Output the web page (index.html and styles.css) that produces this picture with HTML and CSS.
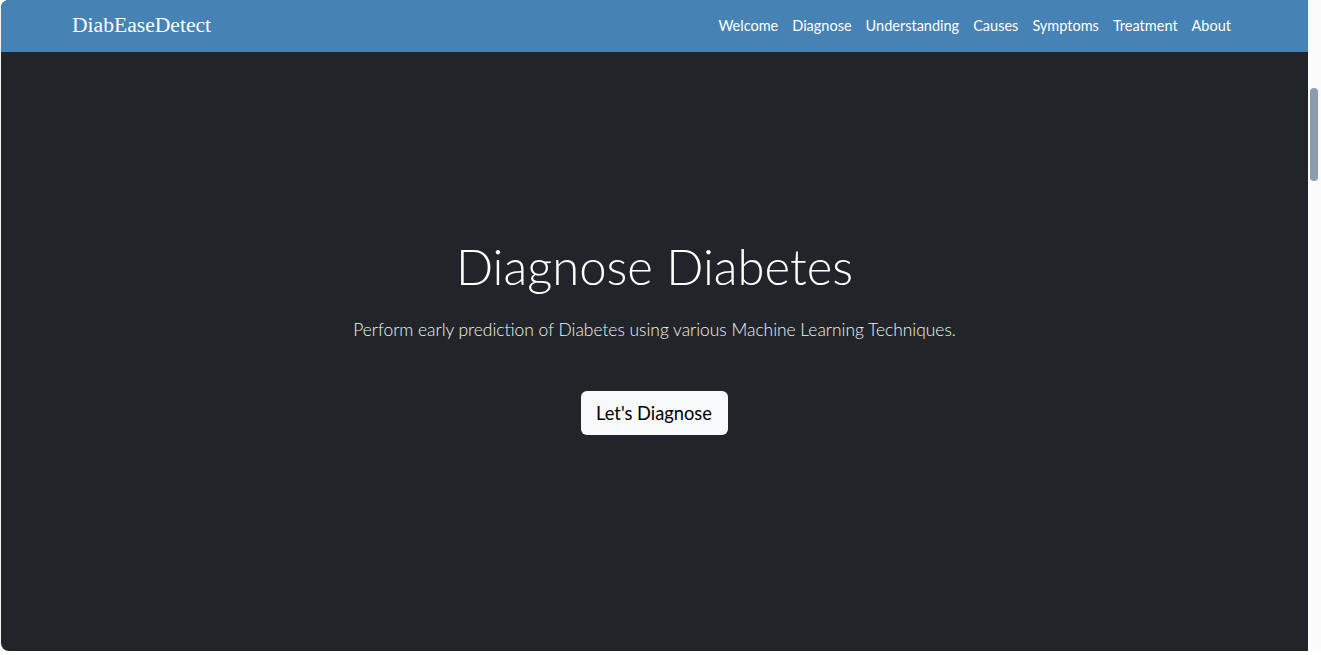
FILE: index.html
```html
<!DOCTYPE html>
<html lang="en">
<head>
<meta charset="utf-8">
<title>DiabEaseDetect</title>
<link rel="stylesheet" href="styles.css">
</head>
<body>
<div class="window">
  <div class="page">
    <nav class="navbar">
      <a class="brand" href="#">DiabEaseDetect</a>
      <ul class="nav-links">
        <li><a href="#">Welcome</a></li>
        <li><a href="#">Diagnose</a></li>
        <li><a href="#">Understanding</a></li>
        <li><a href="#">Causes</a></li>
        <li><a href="#">Symptoms</a></li>
        <li><a href="#">Treatment</a></li>
        <li><a href="#">About</a></li>
      </ul>
    </nav>
    <section class="hero">
      <h1 class="hero-title">Diagnose Diabetes</h1>
      <p class="hero-lead">Perform early prediction of Diabetes using various Machine Learning Techniques.</p>
      <a class="btn-light" href="#">Let's Diagnose</a>
    </section>
  </div>
  <div class="scrollbar">
    <div class="thumb"></div>
  </div>
</div>
</body>
</html>
```
FILE: styles.css
```css
* { box-sizing: border-box; }
html, body { margin: 0; padding: 0; height: 100%; overflow: hidden; background: #ffffff; }
body { font-family: "Lato", "Open Sans", sans-serif; }

.window {
  display: flex;
  height: 651px;
  padding-left: 1px;
  background: #f3f3f3;
  border-radius: 8px 0 0 8px;
}
.page {
  flex: 1;
  display: flex;
  flex-direction: column;
  background: #212529;
  border-radius: 8px 0 0 8px;
  overflow: hidden;
}
.navbar {
  height: 52px;
  background: #4682b4;
  display: flex;
  align-items: center;
  justify-content: space-between;
  padding: 0 70px 0 71px;
}
.brand {
  font-family: "Liberation Serif", "Times New Roman", serif;
  font-size: 21.6px;
  color: #ffffff;
  text-decoration: none;
  padding-bottom: 2px;
}
.nav-links {
  list-style: none;
  margin: 0;
  padding: 0 0 2px;
  display: flex;
}
.nav-links a {
  display: block;
  padding: 0 7px;
  font-size: 14.5px;
  color: #ffffff;
  text-decoration: none;
}
.hero {
  flex: 1;
  display: flex;
  flex-direction: column;
  align-items: center;
  padding-top: 185px;
  color: #ffffff;
}
.hero-title {
  margin: 0;
  font-size: 49px;
  font-weight: 300;
  line-height: 1.2;
}
.hero-lead {
  margin: 21px 0 0;
  font-size: 17.4px;
  font-weight: 300;
  line-height: 1.5;
  color: #f3f3f3;
}
.btn-light {
  margin-top: 48px;
  display: inline-block;
  background: #f8f9fa;
  color: #000000;
  text-decoration: none;
  font-size: 18.3px;
  line-height: 28px;
  height: 44px;
  padding: 8px 16px 8px 15px;
  border-radius: 6px;
}
.scrollbar {
  width: 13px;
  background: #fbfbfb;
  position: relative;
}
.thumb {
  position: absolute;
  top: 88px;
  left: 2px;
  width: 8px;
  height: 93px;
  background: #8b9caf;
  border-radius: 4px;
}
```
